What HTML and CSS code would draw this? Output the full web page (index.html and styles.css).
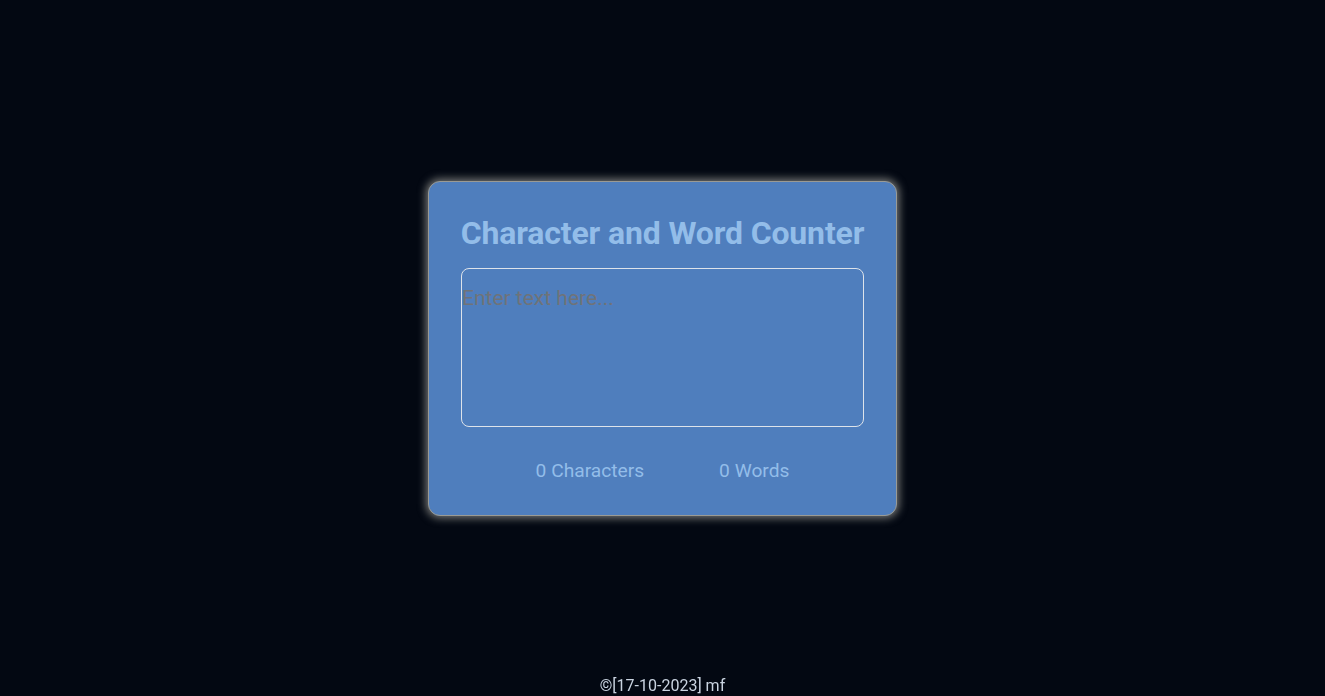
FILE: index.html
```html
<!DOCTYPE html>
<html lang="en">
<head>
<meta charset="UTF-8">
<title>Character and Word Counter</title>
<link rel="stylesheet" href="styles.css">
</head>
<body>
<main class="page">
  <section class="card">
    <h1 class="title">Character and Word Counter</h1>
    <textarea class="input" placeholder="Enter text here..."></textarea>
    <div class="stats">
      <span class="stat">0 Characters</span>
      <span class="stat">0 Words</span>
    </div>
  </section>
</main>
<footer class="footer">©[17-10-2023] mf</footer>
</body>
</html>
```
FILE: styles.css
```css
* { box-sizing: border-box; }
html, body { margin: 0; padding: 0; }
body {
  background: #030812;
  font-family: Roboto, "Liberation Sans", sans-serif;
  min-height: 100vh;
}
.page {
  min-height: 100vh;
  display: flex;
  align-items: center;
  justify-content: center;
}
.card {
  width: 469px;
  background: #4f7ebd;
  border: 1px solid #9a9a94;
  border-radius: 12px;
  padding: 32px 32px 33px;
  box-shadow: 0 0 8px 2px rgba(200, 200, 190, 0.6);
}
.title {
  margin: 0 -10px 16px;
  font-size: 32px;
  font-weight: 700;
  color: #93bde9;
  text-align: center;
  white-space: nowrap;
  letter-spacing: -0.15px;
}
.input {
  display: block;
  width: 100%;
  height: 159px;
  background: transparent;
  border: 1px solid #dde3ea;
  border-radius: 8px;
  padding: 17px 0 0;
  font-family: Roboto, "Liberation Sans", sans-serif;
  font-size: 21px;
  color: #222;
  resize: none;
  outline: none;
}
.input::placeholder { color: #6f7378; }
.stats {
  display: flex;
  justify-content: center;
  gap: 75px;
  margin-top: 32px;
  font-size: 19.2px;
  color: #93bde9;
}
.footer {
  position: fixed;
  left: 0;
  right: 0;
  bottom: 0;
  text-align: center;
  color: #c9d3e0;
  font-size: 16px;
  line-height: 20px;
}
```
